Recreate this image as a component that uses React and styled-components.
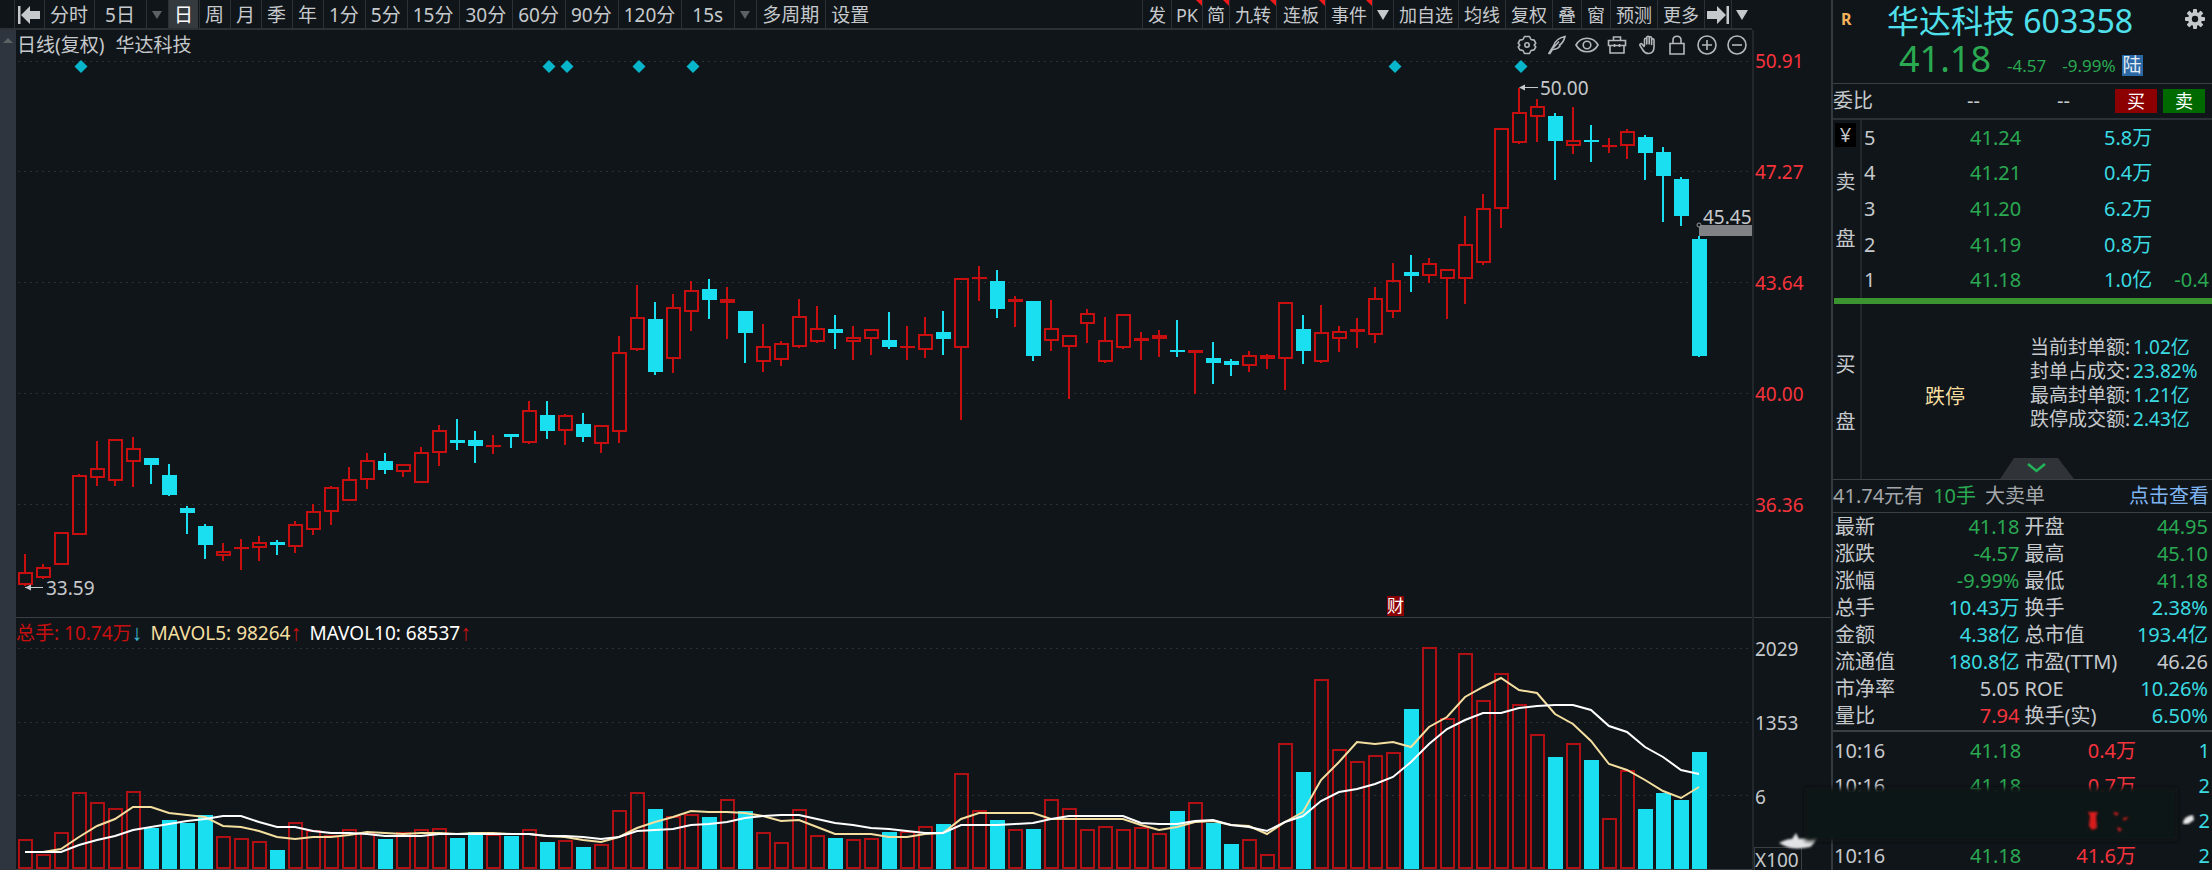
import React from "react";
import styled, { createGlobalStyle, css } from "styled-components";

const colors = {
  bg: "#101519",
  line: "#2b3136",
  rule: "#3a3f44",
  rail: "#2f353e",
  text: "#c6c9cc",
  up: "#c80f0f",
  upText: "#f5333c",
  down: "#19dff0",
  green: "#2aa952",
  cyan: "#3adbe2",
  cream: "#f5dfa0",
  link: "#7fb4f2",
};

const GlobalStyle = createGlobalStyle`
  * {
    box-sizing: border-box;
  }

  body {
    margin: 0;
    background: ${colors.bg};
    color: ${colors.text};
    font-family: "Noto Sans", "Noto Sans CJK SC", sans-serif;
    font-size: 19px;
    line-height: 26px;
  }

  button {
    margin: 0;
    border: 0;
    background: none;
    color: inherit;
    font: inherit;
    cursor: pointer;
  }
`;

const Page = styled.div`
  display: flex;
  align-items: stretch;
  overflow: hidden;
`;

const Main = styled.main`
  flex: 1;
  min-width: 0;
  display: flex;
`;

const Left = styled.div`
  flex: 1;
  min-width: 0;
  display: flex;
  flex-direction: column;
`;

/* ---------- toolbar ---------- */

const Toolbar = styled.nav`
  height: 30px;
  display: flex;
  padding-left: 14px;
  border-bottom: 2px solid ${colors.line};
`;

const ToolGroup = styled.div`
  display: flex;
  gap: ${({ $end }) => ($end ? "0" : "1px")};
  margin-left: ${({ $end }) => ($end ? "auto" : "0")};
  font-size: ${({ $end }) => ($end ? "18px" : "19px")};
`;

const ToolButton = styled.button`
  position: relative;
  display: flex;
  align-items: center;
  justify-content: center;
  height: 28px;
  padding: 2px ${({ $pad = 5 }) => $pad}px 0;
  border-left: 1px solid ${colors.line};
  white-space: nowrap;

  ${({ $active }) =>
    $active &&
    css`
      background: #353a3f;
      color: #fff;
    `}

  ${({ $hot }) =>
    $hot &&
    css`
      &::after {
        content: "";
        position: absolute;
        top: 0;
        right: 0;
        width: 6px;
        height: 6px;
        background: #f01818;
        clip-path: polygon(0 0, 100% 0, 100% 100%);
      }
    `}
`;

const Caret = styled.span`
  border: ${({ $bright }) => ($bright ? 6 : 5)}px solid transparent;
  border-top: ${({ $bright }) => ($bright ? 10 : 8)}px solid
    ${({ $bright }) => ($bright ? colors.text : "#5c6166")};
  border-bottom: 0;
`;

/* ---------- charts ---------- */

const ChartRow = styled.div`
  display: flex;
  flex: 1;
`;

const Rail = styled.div`
  width: 16px;
  display: flex;
  justify-content: center;
  padding-top: 8px;
  background: ${colors.rail};
`;

const RailArrow = styled.span`
  height: 5px;
  border: 5px solid transparent;
  border-bottom: 5px solid #5c6166;
  border-top: 0;
`;

const Charts = styled.div`
  flex: 1;
  min-width: 0;
`;

const ChartHead = styled.header`
  display: flex;
  justify-content: space-between;
  align-items: center;
  height: 26px;
  padding-top: 4px;
`;

const ChartTitle = styled.div`
  display: flex;
  gap: 11px;
  padding-left: 1px;
`;

const ChartTools = styled.div`
  display: flex;
`;

const IconButton = styled.button`
  display: flex;
  align-items: center;
  justify-content: center;
  width: 30px;
  height: 22px;
  padding: 0;
`;

const LineIcon = styled.svg`
  width: 24px;
  height: 22px;
  fill: none;
  stroke: #b4b8bb;
  stroke-width: 1.6;
`;

const Plot = styled.svg`
  display: block;
  width: 100%;
  height: auto;
`;

const VolumeHead = styled.header`
  display: flex;
  gap: 8px;
  height: 29px;
  padding-top: 2px;
  border-top: 1px solid ${colors.rule};
`;

const Tint = styled.span`
  color: ${({ $color }) => $color};
`;

const Trend = styled(Tint)`
  font-family: "Liberation Sans", sans-serif;
  font-size: 22px;
  line-height: 1;
`;

/* ---------- axis ---------- */

const Axis = styled.div`
  width: 79px;
  display: flex;
  flex-direction: column;
  padding-top: 30px;
`;

const AxisInner = styled.div`
  position: relative;
  flex: 1;
  display: flex;
  flex-direction: column;
  border-left: 2px solid #22272c;
`;

const Scale = styled.div`
  display: flex;
  flex-direction: column;
  gap: ${({ $gap }) => $gap}px;
  height: ${({ $height }) => $height};
  padding: 18px 0 0 1px;
  color: ${({ $color }) => $color};
`;

const PriceScale = styled(Scale)`
  border-bottom: 1px solid ${colors.rule};
`;

const Unit = styled.div`
  align-self: flex-start;
  margin-top: auto;
  padding: 0 2px 0 0;
  line-height: 24px;
  border: 1px solid ${colors.rule};
`;

const AxisSmudge = styled.svg`
  position: absolute;
  right: 12px;
  bottom: 22px;
  width: 42px;
  height: 20px;
`;

/* ---------- quote panel ---------- */

const Side = styled.aside`
  width: 381px;
  flex: none;
  border-left: 2px solid #33393e;
  font-size: 20px;
`;

const QuoteHead = styled.header`
  display: flex;
  align-items: flex-start;
  height: 84px;
  padding: 0 7px 0 8px;
  border-bottom: 1px solid ${colors.rule};
`;

const Flag = styled.strong`
  width: 46px;
  padding-top: 6px;
  color: #f3b25a;
  font-size: 16px;
`;

const QuoteMain = styled.div`
  flex: 1;
  white-space: nowrap;
`;

const QuoteTitle = styled.h1`
  margin: 0;
  color: #4fe0ec;
  font-size: 32px;
  font-weight: 400;
  line-height: 42px;
`;

const QuoteLine = styled.div`
  display: flex;
  align-items: baseline;
  padding-left: 12px;
  color: ${colors.green};
  font-size: 17px;
  line-height: 34px;
`;

const Price = styled.span`
  margin-right: 16px;
  font-size: 36px;
`;

const Change = styled.span`
  margin-right: ${({ $gap }) => $gap}px;
`;

const Market = styled.span`
  padding: 0 1px;
  background: #2a68a6;
  color: #e4ecf4;
  font-size: 19px;
  line-height: 21px;
`;

const GearButton = styled.button`
  padding: 9px 0 0;
`;

const RatioRow = styled.div`
  display: grid;
  grid-template-columns: 134px 90px 1fr auto;
  align-items: center;
  height: 36px;
  padding-right: 7px;
  border-bottom: 2px solid ${colors.line};
`;

const TradeButtons = styled.div`
  display: flex;
  gap: 6px;
`;

const TradeButton = styled.button`
  width: 42px;
  height: 24px;
  padding: 0;
  background: ${({ $side }) => ($side === "buy" ? "#8c0000" : "#006a00")};
  color: #fff;
  font-size: 18px;
  line-height: 24px;
`;

const Book = styled.section`
  display: flex;
  height: ${({ $height }) => $height}px;
`;

const BookRail = styled.div`
  width: 29px;
  display: flex;
  flex-direction: column;
  align-items: center;
  gap: 31px;
  padding: ${({ $top }) => $top}px 4px 0 2px;
  border-right: 2px solid #22272c;
`;

const Yen = styled.span`
  width: 21px;
  margin-bottom: -9px;
  background: #000;
  line-height: 24px;
  text-align: center;
`;

const Table = styled.table`
  width: 100%;
  border-collapse: collapse;
  table-layout: fixed;
`;

const Cell = styled.td`
  height: ${({ $row }) => $row}px;
  padding: 0 ${({ $right = 0 }) => $right}px 0 ${({ $left = 0 }) => $left}px;
  width: ${({ $width }) => $width || "auto"};
  color: ${({ $color }) => $color || "inherit"};
  text-align: ${({ $align }) => $align || "left"};
  font-weight: 400;
  white-space: nowrap;
`;

const PressureBar = styled.div`
  height: 6px;
  margin-left: 1px;
  background: #3b9430;
`;

const LimitArea = styled.div`
  position: relative;
  flex: 1;
  display: flex;
  align-items: flex-start;
`;

const LimitLabel = styled.span`
  width: 168px;
  padding: 80px 0 0 63px;
  color: ${colors.cream};
`;

const LimitList = styled.dl`
  margin: 0;
  padding-top: 31px;
  font-size: 19px;
  line-height: 24px;
  white-space: nowrap;

  div {
    display: flex;
    gap: 3px;
  }

  dd {
    margin: 0;
    color: ${colors.cyan};
  }
`;

const ExpandButton = styled.button`
  position: absolute;
  left: 138px;
  bottom: 0;
  width: 74px;
  height: 21px;
  padding: 0;
  line-height: 0;
`;

const Notice = styled.div`
  display: flex;
  gap: 9px;
  height: 34px;
  padding: 3px 3px 0 0;
  border: solid ${colors.rule};
  border-width: 1px 0;
  color: #a4a7aa;

  a {
    margin-left: auto;
    color: ${colors.link};
    text-decoration: none;
  }
`;

const Stats = styled.section`
  padding-bottom: 1px;
  border-bottom: 2px solid ${colors.rule};
`;

const Ticks = styled.section`
  position: relative;
  padding-top: 1px;
`;

const Smear = styled.svg`
  position: absolute;
  left: -34px;
  top: 44px;
  width: 400px;
  height: 72px;
`;

/* ---------- data ---------- */

const periods = [
  ["分时"],
  ["5日", { $pad: 10 }],
  ["caret"],
  ["日", { $active: true }],
  ["周"],
  ["月"],
  ["季"],
  ["年"],
  ["1分"],
  ["5分"],
  ["15分"],
  ["30分"],
  ["60分"],
  ["90分"],
  ["120分"],
  ["15s", { $pad: 10 }],
  ["caret"],
  ["多周期"],
  ["设置"],
];

const actions = [
  ["发"],
  ["PK", { $hot: true, $pad: 4 }],
  ["简", { $hot: true, $pad: 4 }],
  ["九转", { $hot: true }],
  ["连板", { $hot: true, $pad: 6 }],
  ["事件", { $hot: true }],
  ["caret", { $pad: 4 }],
  ["加自选"],
  ["均线"],
  ["复权"],
  ["叠"],
  ["窗"],
  ["预测"],
  ["更多"],
];

// [rising, high, body top, body bottom, low, volume top]
const bars = [
  [1, 554, 573, 584, 586, 840], [1, 564, 568, 577, 579, 855], [1, 533, 533, 564, 564, 833],
  [1, 474, 476, 534, 535, 793], [1, 441, 469, 477, 486, 803], [1, 440, 440, 480, 486, 809],
  [1, 437, 449, 461, 487, 792], [0, 458, 458, 465, 484, 828], [0, 464, 475, 495, 496, 820],
  [0, 506, 508, 513, 534, 823], [0, 524, 526, 545, 559, 815], [1, 543, 552, 555, 561, 837],
  [1, 539, 548, 548, 570, 839], [1, 536, 543, 547, 561, 842], [0, 540, 542, 545, 555, 850],
  [1, 521, 525, 546, 553, 823], [1, 504, 512, 529, 535, 831], [1, 486, 488, 511, 525, 836],
  [1, 467, 480, 500, 501, 830], [1, 453, 461, 479, 489, 833], [0, 453, 461, 470, 474, 839],
  [1, 464, 465, 471, 477, 833], [1, 447, 453, 482, 483, 830], [1, 425, 431, 452, 466, 829],
  [0, 419, 440, 443, 450, 838], [0, 431, 440, 446, 463, 832], [1, 435, 446, 446, 454, 835],
  [0, 434, 434, 437, 448, 836], [1, 401, 411, 442, 444, 830], [0, 401, 415, 431, 439, 842],
  [1, 414, 416, 430, 445, 841], [0, 413, 424, 437, 442, 847], [1, 425, 426, 443, 453, 845],
  [1, 336, 353, 431, 443, 811], [1, 285, 318, 349, 351, 793], [0, 302, 319, 372, 375, 809],
  [1, 294, 308, 358, 373, 817], [1, 281, 291, 311, 331, 815], [0, 279, 289, 300, 319, 817],
  [1, 287, 300, 302, 339, 800], [0, 311, 311, 333, 363, 811], [1, 324, 347, 361, 372, 833],
  [1, 341, 344, 359, 366, 843], [1, 299, 317, 346, 348, 810], [1, 306, 329, 341, 343, 836],
  [0, 315, 329, 333, 349, 838], [1, 326, 338, 341, 360, 840], [1, 329, 330, 338, 355, 839],
  [0, 312, 340, 347, 349, 832], [1, 326, 347, 347, 360, 832], [1, 317, 335, 349, 358, 827],
  [0, 311, 332, 339, 355, 824], [1, 279, 279, 347, 420, 774], [1, 266, 278, 278, 301, 811],
  [0, 270, 281, 309, 318, 820], [1, 296, 300, 301, 327, 830], [0, 301, 301, 356, 361, 829],
  [1, 300, 329, 340, 351, 800], [1, 335, 336, 346, 399, 809], [1, 309, 314, 323, 343, 830],
  [1, 317, 341, 361, 363, 827], [1, 314, 315, 347, 349, 830], [1, 332, 339, 340, 360, 828],
  [1, 330, 336, 338, 357, 834], [0, 320, 350, 352, 357, 811], [1, 350, 351, 352, 394, 803],
  [0, 342, 358, 363, 384, 823], [0, 359, 361, 365, 376, 844], [1, 351, 356, 365, 372, 840],
  [1, 354, 356, 358, 369, 855], [1, 302, 303, 358, 390, 744], [0, 315, 329, 351, 364, 772],
  [1, 305, 333, 361, 363, 680], [1, 326, 332, 338, 352, 750], [1, 318, 330, 331, 348, 762],
  [1, 287, 299, 334, 343, 756], [1, 263, 281, 311, 318, 753], [0, 255, 272, 276, 292, 709],
  [1, 258, 264, 275, 283, 648], [1, 269, 270, 278, 319, 719], [1, 216, 245, 278, 304, 654],
  [1, 194, 209, 262, 265, 701], [1, 128, 129, 208, 228, 674], [1, 88, 113, 142, 144, 705],
  [1, 99, 107, 116, 142, 735], [0, 113, 116, 141, 180, 757], [1, 107, 141, 145, 154, 744],
  [0, 125, 140, 142, 162, 760], [1, 138, 146, 146, 153, 819], [1, 129, 132, 145, 159, 771],
  [0, 135, 137, 153, 180, 809], [0, 147, 152, 176, 222, 793], [0, 177, 179, 216, 226, 800],
  [0, 236, 239, 356, 357, 752],
];

const mavol5 = [
  852, 852, 849, 837, 826, 819, 807, 807, 813, 815, 817, 826, 827, 831, 837, 839, 837, 837, 835,
  832, 833, 834, 833, 833, 834, 833, 833, 834, 834, 836, 837, 840, 842, 837, 828, 822, 817, 811,
  812, 812, 813, 816, 821, 820, 827, 834, 834, 834, 837, 837, 834, 833, 819, 813, 813, 813, 813,
  819, 819, 819, 819, 819, 825, 830, 827, 822, 821, 825, 826, 834, 822, 812, 780, 762, 742, 744,
  742, 747, 727, 717, 697, 687, 678, 690, 693, 714, 724, 741, 764, 770, 780, 791, 798, 787,
];

const mavol10 = [
  852, 852, 852, 845, 840, 836, 830, 827, 824, 821, 819, 816, 816, 822, 827, 827, 831, 833, 833,
  834, 836, 836, 836, 834, 834, 834, 834, 834, 834, 836, 836, 837, 839, 837, 831, 830, 829, 825,
  824, 822, 818, 816, 815, 815, 819, 823, 825, 828, 829, 831, 833, 833, 825, 825, 825, 824, 823,
  819, 816, 816, 816, 816, 823, 824, 824, 821, 820, 825, 827, 831, 822, 816, 801, 792, 789, 784,
  777, 762, 744, 729, 720, 713, 713, 708, 706, 705, 705, 710, 726, 732, 747, 757, 770, 774,
];

const diamonds = [81, 549, 567, 639, 693, 1395, 1521];

const asks = [
  ["5", "41.24", "5.8万", ""],
  ["4", "41.21", "0.4万", ""],
  ["3", "41.20", "6.2万", ""],
  ["2", "41.19", "0.8万", ""],
  ["1", "41.18", "1.0亿", "-0.4"],
];

const limits = [
  ["当前封单额:", "1.02亿"],
  ["封单占成交:", "23.82%"],
  ["最高封单额:", "1.21亿"],
  ["跌停成交额:", "2.43亿"],
];

const { green, cyan, text, upText } = colors;

const stats = [
  ["最新", "41.18", green, "开盘", "44.95", green],
  ["涨跌", "-4.57", green, "最高", "45.10", green],
  ["涨幅", "-9.99%", green, "最低", "41.18", green],
  ["总手", "10.43万", cyan, "换手", "2.38%", cyan],
  ["金额", "4.38亿", cyan, "总市值", "193.4亿", cyan],
  ["流通值", "180.8亿", cyan, "市盈(TTM)", "46.26", text],
  ["市净率", "5.05", text, "ROE", "10.26%", cyan],
  ["量比", "7.94", upText, "换手(实)", "6.50%", cyan],
];

const ticks = [
  ["10:16", "41.18", "0.4万", "1"],
  ["10:16", "41.18", "0.7万", "2"],
  ["", "", "", "2"],
  ["10:16", "41.18", "41.6万", "2"],
];

/* ---------- components ---------- */

const barX = (i) => 25 + i * 18;
const toPoints = (values) => values.map((y, i) => `${barX(i)},${y}`).join(" ");

const ToolItems = ({ items, bright }) =>
  items.map(([label, props], i) =>
    label === "caret" ? (
      <ToolButton key={i} aria-label="展开" {...props}>
        <Caret $bright={bright} />
      </ToolButton>
    ) : (
      <ToolButton key={i} {...props}>
        {label}
      </ToolButton>
    )
  );

const Candle = ({ x, bar: [rising, high, top, bottom, low] }) => {
  const color = rising ? colors.up : colors.down;
  return (
    <g stroke={color} strokeWidth="2" fill="none">
      {rising ? (
        <>
          <path d={`M${x} ${high}V${top}M${x} ${bottom}V${low}`} />
          <rect x={x - 6} y={top} width="13" height={Math.max(bottom - top, 0.1)} />
        </>
      ) : (
        <>
          <path d={`M${x} ${high}V${low}`} />
          <rect x={x - 7} y={top} width="15" height={bottom - top} fill={color} stroke="none" />
        </>
      )}
    </g>
  );
};

const Grid = ({ lines }) =>
  lines.map((y) => (
    <path key={y} d={`M18 ${y}H1748`} stroke="#2c3237" strokeWidth="1" strokeDasharray="2 4" />
  ));

const PriceChart = () => (
  <Plot viewBox="16 56 1736 561" role="img" aria-label="日线">
    <Grid lines={[61.5, 171.5, 282.5, 393.5, 504.5]} />
    {diamonds.map((x) => (
      <path key={x} d={`M${x} 60l6.5 6.5l-6.5 6.5l-6.5 -6.5z`} fill="#08b6cc" />
    ))}
    {bars.map((bar, i) => (
      <Candle key={i} x={barX(i)} bar={bar} />
    ))}
    <g fill={colors.text} stroke={colors.text}>
      <path d="M1521 87.500H1538M25 587.500H43" />
      <path d="M1519 87.500l6 -3v6zM25 587.500l6 -3v6z" stroke="none" />
    </g>
    <g fill={colors.text} fontSize="19">
      <text x="1540" y="95">50.00</text>
      <text x="46" y="595">33.59</text>
      <text x="1703" y="224">45.45</text>
    </g>
    <rect x="1699" y="225" width="53" height="11" fill="#808286" />
    <circle cx="1699" cy="225" r="2" fill="#101519" stroke="#9a9da0" />
    <rect x="1387" y="596" width="17" height="20" fill="#8b0000" />
    <text x="1387" y="612" fontSize="17" fill="#fff">财</text>
  </Plot>
);

const VolumeChart = () => (
  <Plot viewBox="16 646 1736 224" role="img" aria-label="成交量">
    <Grid lines={[648.5, 722.5, 795.5]} />
    {bars.map(([rising, , , , , top], i) =>
      rising ? (
        <rect
          key={i}
          x={barX(i) - 6}
          y={top}
          width="13"
          height={868 - top}
          fill="none"
          stroke="#b01014"
          strokeWidth="2"
        />
      ) : (
        <rect key={i} x={barX(i) - 7} y={top} width="15" height={869 - top} fill={colors.down} />
      )
    )}
    <path d="M16 869.500H1752" stroke={colors.rule} />
    <g fill="none" strokeWidth="2">
      <polyline points={toPoints(mavol5)} stroke={colors.cream} />
      <polyline points={toPoints(mavol10)} stroke="#fff" />
    </g>
  </Plot>
);

const chartIcons = [
  [
    "指标",
    <>
      <path d="M9.500 2.500h5l1.500 3 3.200 .6 1.600 3.200-1.600 1.700 1.600 1.900-1.700 3-3.100 .6-1.500 3h-5l-1.500-3-3.100-.6-1.700-3 1.600-1.900-1.600-1.700 1.600-3.200 3.200-.6z" strokeLinejoin="round" />
      <circle cx="12" cy="11" r="2.200" />
    </>,
  ],
  ["画线", <path d="M3.500 20l5-8c1-4 5-8 11.500-9.500-1 4-2.500 7-5.500 8.500l.5 1c-2 2.500-4.500 3.500-7.500 3.500l-3 4.500M8 14l6-6.500" />],
  [
    "显示",
    <>
      <path d="M1 11C6 2 18 2 23 11C18 20 6 20 1 11z" />
      <circle cx="12" cy="11" r="3.800" />
    </>,
  ],
  ["工具箱", <path d="M3.500 6.500h17v5h-17zM5 11.500v7.500h14v-7.500M8.500 6.500V3h7v3.500M9.500 10v3M14.500 10v3" />],
  [
    "拖动",
    <path
      d="M8 12V5.500c0-1.700 2.300-1.700 2.300 0V10V3.500c0-1.700 2.400-1.700 2.400 0V10V4c0-1.700 2.400-1.700 2.400 0v6.500V6c0-1.700 2.400-1.700 2.400 0v7c0 4-2 6.500-5.500 6.500-3 0-4.500-1.300-6-4L3.500 11.500c-.8-1.600 1.200-2.400 2.200-1.200L8 13"
      strokeLinejoin="round"
      transform="translate(1.500 0)"
    />,
  ],
  ["锁定", <path d="M5 9.500h14V20H5zM8 9.500V6c0-5 8-5 8 0v3.500" />],
  [
    "放大",
    <>
      <circle cx="12" cy="11" r="9" />
      <path d="M7 11h10M12 6v10" />
    </>,
  ],
  [
    "缩小",
    <>
      <circle cx="12" cy="11" r="9" />
      <path d="M7 11h10" />
    </>,
  ],
];

const SkipIcon = ({ flip }) => (
  <svg width="24" height="20" viewBox="0 0 24 20" fill={colors.text} aria-hidden="true">
    <path
      d="M1 1h2.500v18H1zM4 10l9-9v5h10v8H13v5z"
      transform={flip ? "translate(24 0) scale(-1 1)" : undefined}
    />
  </svg>
);

const GearIcon = () => (
  <svg width="20" height="20" viewBox="-10 -10 20 20" aria-hidden="true">
    <g fill={colors.text}>
      {[0, 45, 90, 135].map((angle) => (
        <rect key={angle} x="-2" y="-10" width="4" height="20" rx="1" transform={`rotate(${angle})`} />
      ))}
      <circle r="7" />
    </g>
    <circle r="3.200" fill={colors.bg} />
  </svg>
);

const Smudges = () => (
  <Smear viewBox="0 0 400 72" aria-hidden="true">
    <defs>
      <filter id="soft" x="-10%" y="-20%" width="120%" height="140%">
        <feGaussianBlur stdDeviation="2" />
      </filter>
      <filter id="faint">
        <feGaussianBlur stdDeviation="0.8" />
      </filter>
    </defs>
    <rect x="6" y="12" width="372" height="53" fill={colors.bg} filter="url(#soft)" />
    <g fill="#d81e1e" filter="url(#faint)">
      <path d="M289 36h10l-2 4 1 12-5 2-3-4 1-10z" />
      <path d="M314 36l6 1-3 3zM324 42l6-1-5 4zM318 51l5 2-3 3z" />
    </g>
    <path d="M384 48c0-6 4-8 10-9l1 5-6 4z" fill="#e8e8e8" filter="url(#faint)" />
  </Smear>
);

const OrderPanel = () => (
  <>
    <Book $height={178}>
      <BookRail $top={3}>
        <Yen>¥</Yen>
        <span>卖</span>
        <span>盘</span>
      </BookRail>
      <Table>
        <tbody>
          {asks.map(([level, price, volume, diff]) => (
            <tr key={level}>
              <Cell as="th" scope="row" $row={35} $left={2} $width="108px">
                {level}
              </Cell>
              <Cell $color={green} $width="134px">
                {price}
              </Cell>
              <Cell $color={cyan} $width="60px">
                {volume}
              </Cell>
              <Cell $color={green} $align="right" $right={3}>
                {diff}
              </Cell>
            </tr>
          ))}
        </tbody>
      </Table>
    </Book>
    <PressureBar />
    <Book $height={175}>
      <BookRail $top={48}>
        <span>买</span>
        <span>盘</span>
      </BookRail>
      <LimitArea>
        <LimitLabel>跌停</LimitLabel>
        <LimitList>
          {limits.map(([label, value]) => (
            <div key={label}>
              <dt>{label}</dt>
              <dd>{value}</dd>
            </div>
          ))}
        </LimitList>
        <ExpandButton aria-label="展开盘口">
          <svg width="74" height="21" viewBox="0 0 74 21" aria-hidden="true">
            <path d="M14 0h44l16 21H0z" fill="#303337" />
            <path d="M28 6l8.500 7 8.500-7" fill="none" stroke="#23b45a" strokeWidth="2.500" />
          </svg>
        </ExpandButton>
      </LimitArea>
    </Book>
  </>
);

const QuotePanel = () => (
  <Side>
    <QuoteHead>
      <Flag>R</Flag>
      <QuoteMain>
        <QuoteTitle>华达科技 603358</QuoteTitle>
        <QuoteLine>
          <Price>41.18</Price>
          <Change $gap={16}>-4.57</Change>
          <Change $gap={6}>-9.99%</Change>
          <Market>陆</Market>
        </QuoteLine>
      </QuoteMain>
      <GearButton aria-label="面板设置">
        <GearIcon />
      </GearButton>
    </QuoteHead>
    <RatioRow>
      <span>委比</span>
      <span>--</span>
      <span>--</span>
      <TradeButtons>
        <TradeButton $side="buy">买</TradeButton>
        <TradeButton $side="sell">卖</TradeButton>
      </TradeButtons>
    </RatioRow>
    <OrderPanel />
    <Notice>
      <span>41.74元有</span>
      <Tint $color={green}>10手</Tint>
      <span>大卖单</span>
      <a href="#orders">点击查看</a>
    </Notice>
    <Stats>
      <Table>
        <tbody>
          {stats.map(([name, value, color, name2, value2, color2]) => (
            <tr key={name}>
              <Cell as="th" scope="row" $row={27} $left={2} $width="25%">
                {name}
              </Cell>
              <Cell $color={color} $align="right" $right={3} $width="25%">
                {value}
              </Cell>
              <Cell as="th" scope="row" $left={2} $width="28%">
                {name2}
              </Cell>
              <Cell $color={color2} $align="right" $right={4}>
                {value2}
              </Cell>
            </tr>
          ))}
        </tbody>
      </Table>
    </Stats>
    <Ticks>
      <Table>
        <tbody>
          {ticks.map(([time, price, volume, count], i) => (
            <tr key={i}>
              <Cell $row={35} $left={1} $width="137px">
                {time}
              </Cell>
              <Cell $color={green} $width="70px">
                {price}
              </Cell>
              <Cell $color={upText} $align="right" $width="96px">
                {volume}
              </Cell>
              <Cell $color={cyan} $align="right" $right={2}>
                {count}
              </Cell>
            </tr>
          ))}
        </tbody>
      </Table>
      <Smudges />
    </Ticks>
  </Side>
);

const App = () => (
  <Page>
    <GlobalStyle />
    <Main>
      <Left>
        <Toolbar>
          <ToolGroup>
            <ToolButton $pad={2} aria-label="后退">
              <SkipIcon />
            </ToolButton>
            <ToolItems items={periods} />
          </ToolGroup>
          <ToolGroup $end>
            <ToolItems items={actions} bright />
            <ToolButton $pad={1} aria-label="前进">
              <SkipIcon flip />
            </ToolButton>
            <ToolItems items={[["caret", { $pad: 4 }]]} bright />
          </ToolGroup>
        </Toolbar>
        <ChartRow>
          <Rail>
            <RailArrow />
          </Rail>
          <Charts>
            <ChartHead>
              <ChartTitle>
                <span>日线(复权)</span>
                <span>华达科技</span>
              </ChartTitle>
              <ChartTools>
                {chartIcons.map(([label, shape]) => (
                  <IconButton key={label} aria-label={label}>
                    <LineIcon viewBox="0 0 24 22">{shape}</LineIcon>
                  </IconButton>
                ))}
              </ChartTools>
            </ChartHead>
            <PriceChart />
            <VolumeHead>
              <span>
                <Tint $color={colors.up}>总手: 10.74万</Tint>
                <Trend $color="#3fb6d0">↓</Trend>
              </span>
              <span>
                <Tint $color={colors.cream}>MAVOL5: 98264</Tint>
                <Trend $color={colors.up}>↑</Trend>
              </span>
              <span>
                <Tint $color="#fff">MAVOL10: 68537</Tint>
                <Trend $color={colors.up}>↑</Trend>
              </span>
            </VolumeHead>
            <VolumeChart />
          </Charts>
        </ChartRow>
      </Left>
      <Axis>
        <AxisInner>
          <PriceScale $gap={85} $height="588px" $color={upText}>
            <span>50.91</span>
            <span>47.27</span>
            <span>43.64</span>
            <span>40.00</span>
            <span>36.36</span>
          </PriceScale>
          <Scale $gap={48} $height="auto" $color={text}>
            <span>2029</span>
            <span>1353</span>
            <span>6</span>
          </Scale>
          <Unit>X100</Unit>
          <AxisSmudge viewBox="0 0 42 20" aria-hidden="true">
            <defs>
              <filter id="haze">
                <feGaussianBlur stdDeviation="0.8" />
              </filter>
            </defs>
            <path
              d="M2 12c4-2 8-4 13-4l4-6 3 6c4-1 6 0 10-1l9-2c-3 5-5 9-8 11-9 2-20 2-25-1z"
              fill="#e2e3e4"
              filter="url(#haze)"
            />
          </AxisSmudge>
        </AxisInner>
      </Axis>
    </Main>
    <QuotePanel />
  </Page>
);

export default App;
